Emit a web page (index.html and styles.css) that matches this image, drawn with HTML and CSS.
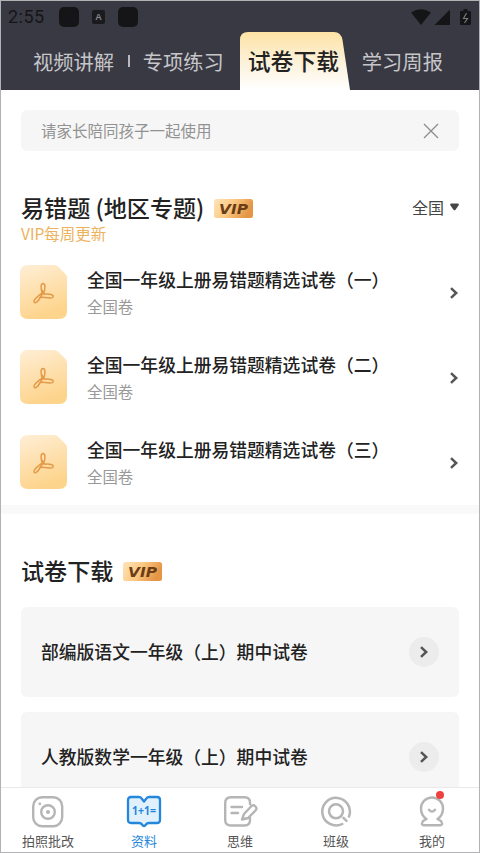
FILE: index.html
```html
<!DOCTYPE html>
<html lang="zh-CN">
<head>
<meta charset="utf-8">
<title>试卷下载</title>
<link rel="stylesheet" href="styles.css">
</head>
<body>
<svg class="defs" width="0" height="0" aria-hidden="true">
  <defs>
    <linearGradient id="doc" x1="0" y1="0" x2="0.3" y2="1"><stop offset="0" stop-color="#ffeed6"/><stop offset="1" stop-color="#fdd48c"/></linearGradient>
    <linearGradient id="tab" x1="0" y1="0" x2="0" y2="1"><stop offset="0" stop-color="#fde2a4"/><stop offset=".5" stop-color="#fcf1d8"/><stop offset="1" stop-color="#fff"/></linearGradient>
    <linearGradient id="gold" x1="0" y1="0" x2="1" y2="0.3"><stop offset="0" stop-color="#fee5ba"/><stop offset=".5" stop-color="#fbc983"/><stop offset="1" stop-color="#e59546"/></linearGradient>
    <symbol id="pdf" viewBox="0 0 47 54">
      <path fill="url(#doc)" d="M8 0H34Q36.500 0 38.300 1.800L45 8.500Q47 10.500 47 13V46Q47 54 39 54H8Q0 54 0 46V8Q0 0 8 0Z"/>
      <path fill="none" stroke="#e59a48" stroke-width="1.500" stroke-linejoin="round" stroke-linecap="round" d="M22.500 29C20.500 24 20.500 18.500 23 18.500S25.600 24 23.500 29M22.200 28C19.500 30 14 34 14 36.200S16.500 38.500 19 34.500L22 29.500M19.500 32.800C24 31 32 34.500 33 32.200S31 28.800 25 29.200Q22.500 27 22 25"/>
    </symbol>
    <symbol id="vip" viewBox="0 0 39 19">
      <rect width="39" height="19" rx="2.500" fill="url(#gold)"/>
      <text x="5" y="14.600" textLength="29" lengthAdjust="spacingAndGlyphs" class="vip-text">VIP</text>
    </symbol>
    <symbol id="chevron" viewBox="0 0 10 14"><path d="M2 2.200L7.200 7L2 11.800" fill="none" stroke="#555" stroke-width="2.500"/></symbol>
  </defs>
</svg>
<div class="phone">
  <header class="header">
    <div class="status">
      <span class="clock">2:55</span>
      <i class="blob"></i><i class="mini">A</i><i class="blob last"></i>
      <svg class="signals" width="62" height="18" viewBox="0 0 62 18">
        <path fill="#151518" d="M1 4.500Q11 -2 21 4.500L11 17ZM40 1.500V17H24.500ZM51 3H53.500V1H57.500V3H60Q61 3 61 4V16Q61 17 60 17H51Q50 17 50 16V4Q50 3 51 3Z"/>
        <path d="M56.500 5L53.500 10.500H57.500L54.500 15" fill="none" stroke="#77777d" stroke-width="1.200"/>
      </svg>
    </div>
    <nav class="tabs">
      <span class="tab video">视频讲解</span><i class="split"></i><span class="tab practice">专项练习</span>
      <span class="tab active"><svg class="shape" width="111" height="58" viewBox="0 0 111 58"><path fill="url(#tab)" d="M0 58V8Q0 0 8 0H94Q101 0 102.500 8L110 58Z"/></svg><b>试卷下载</b></span>
      <span class="tab weekly">学习周报</span>
    </nav>
  </header>
  <main class="content">
    <div class="notice"><span>请家长陪同孩子一起使用</span><svg width="16" height="16" viewBox="0 0 16 16"><path d="M1 1L15 15M15 1L1 15" stroke="#8c8c8c" stroke-width="1.300"/></svg></div>
    <section class="mistakes">
      <div class="heading">
        <h2>易错题 (地区专题)</h2><svg class="vip" width="39" height="19"><use href="#vip"/></svg>
        <span class="region">全国<svg width="9" height="8" viewBox="0 0 9 8"><path fill="#444" d="M1.500 .5H7.500Q9.500 .5 8.500 2.500L5.500 6.700Q4.500 8 3.500 6.700L.5 2.500Q-.5 .5 1.500 .5Z"/></svg></span>
      </div>
      <p class="update">VIP每周更新</p>
      <div class="list">
        <div class="item"><svg class="doc" width="47" height="54"><use href="#pdf"/></svg><div class="info"><h3>全国一年级上册易错题精选试卷（一）</h3><p>全国卷</p></div><svg class="arrow" width="10" height="14"><use href="#chevron"/></svg></div>
        <div class="item"><svg class="doc" width="47" height="54"><use href="#pdf"/></svg><div class="info"><h3>全国一年级上册易错题精选试卷（二）</h3><p>全国卷</p></div><svg class="arrow" width="10" height="14"><use href="#chevron"/></svg></div>
        <div class="item"><svg class="doc" width="47" height="54"><use href="#pdf"/></svg><div class="info"><h3>全国一年级上册易错题精选试卷（三）</h3><p>全国卷</p></div><svg class="arrow" width="10" height="14"><use href="#chevron"/></svg></div>
      </div>
    </section>
    <section class="papers">
      <div class="heading"><h2>试卷下载</h2><svg class="vip" width="39" height="19"><use href="#vip"/></svg></div>
      <div class="card"><h3>部编版语文一年级（上）期中试卷</h3><span class="go"><svg width="10" height="14"><use href="#chevron"/></svg></span></div>
      <div class="card"><h3>人教版数学一年级（上）期中试卷</h3><span class="go"><svg width="10" height="14"><use href="#chevron"/></svg></span></div>
    </section>
  </main>
  <nav class="bottom">
    <div class="nav"><svg width="36" height="34" viewBox="0 0 36 34" fill="none" stroke="#b5b5b5" stroke-width="2.400"><rect x="3.200" y="3.200" width="29" height="29" rx="9"/><circle cx="18" cy="18" r="6.800"/><circle cx="18" cy="18" r="2" fill="#b5b5b5" stroke="none"/><circle cx="9.800" cy="9.800" r="1.400" fill="#b5b5b5" stroke="none"/></svg><span>拍照批改</span></div>
    <div class="nav on"><svg width="36" height="34" viewBox="0 0 36 34"><path d="M5 3H13Q15 3 16 5L18 7.500L20 5Q21 3 23 3H31Q34 3 34 6V26Q34 29 31 29H23Q21 29 20 30.500Q18 33.500 16 30.500Q15 29 13 29H5Q2 29 2 26V6Q2 3 5 3Z" fill="#e0f1fd" stroke="#2587db" stroke-width="2.300" stroke-linejoin="round"/><text x="18" y="20.500" text-anchor="middle" textLength="24" lengthAdjust="spacingAndGlyphs" class="sum">1+1=</text></svg><span>资料</span></div>
    <div class="nav"><svg width="36" height="34" viewBox="0 0 36 34" fill="none" stroke="#b5b5b5" stroke-width="2.400" stroke-linecap="round" stroke-linejoin="round"><path d="M28 10V8.500Q28 3.200 22.500 3.200H9Q3.200 3.200 3.200 9V26Q3.200 31.500 9 31.500H22.500Q28 31.500 28 26V24M9.500 13H20M9.500 19H16M20 25.500L22 20L29.500 12Q31.500 10.500 33.500 12.500T33.500 16.500L26 24Z"/></svg><span>思维</span></div>
    <div class="nav"><svg width="36" height="34" viewBox="0 0 36 34" fill="none" stroke="#b5b5b5" stroke-width="2.500" stroke-linecap="round"><path d="M31 22.500A13.800 13.800 0 1 0 24.200 30M25.500 23.800L28.500 26.800"/><circle cx="18" cy="17.300" r="7"/></svg><span>班级</span></div>
    <div class="nav"><svg width="36" height="34" viewBox="0 0 36 34" fill="none" stroke="#b5b5b5" stroke-width="2.400" stroke-linecap="round" stroke-linejoin="round"><path d="M12.500 25C8.500 22.500 7 18.500 7 14.500A11 11 0 0 1 29 14.500C29 18.500 27.500 22.500 23.500 25L27 27Q29.500 31.300 26 31.300H10Q6.500 31.300 9 27ZM15 15.800Q18 19.500 21 15.800"/></svg><i class="dot"></i><span>我的</span></div>
  </nav>
</div>
</body>
</html>
```
FILE: styles.css
```css
* { box-sizing: border-box; }
body { margin: 0; font-family: "Noto Sans CJK SC", sans-serif; color: #222; background: #fff; }
h2, h3, p { margin: 0; font-weight: 500; }
i { font-style: normal; }
svg { display: block; flex: none; }
.defs { position: absolute; }
.phone { width: 480px; height: 853px; border: 1px solid #b2b2b4; display: flex; flex-direction: column; overflow: hidden; }

.header { height: 89px; background: #393943; flex: none; }
.status { height: 31px; display: flex; align-items: center; padding: 0 7px 0 7px; }
.clock { font: 400 18px/30px Roboto, sans-serif; color: #151518; width: 51px; letter-spacing: .5px; }
.blob { width: 20px; height: 20px; border-radius: 5px; background: #151517; }
.mini { width: 13px; height: 14px; margin: 0 13px; background: #1b1b1f; border-radius: 2px; color: #85858a; font: 700 9px/14px "Liberation Sans", sans-serif; text-align: center; }
.signals { margin-left: auto; }
.tabs { height: 58px; display: flex; align-items: center; }
.tab { font-size: 20.3px; line-height: 58px; color: #c6c6c9; white-space: nowrap; flex: none; }
.video { margin-left: 32px; }
.split { width: 1.5px; height: 12px; background: #b9b9bd; margin: 0 13px 0 14px; }
.active { position: relative; width: 111px; height: 58px; margin-left: 16px; padding-left: 8px; font-size: 22.8px; color: #222; }
.active b { position: relative; font-weight: 500; }
.shape { position: absolute; left: 0; top: 0; }
.weekly { margin-left: 11px; }

.content { flex: 1; min-height: 0; overflow: hidden; }
.notice { margin: 20px 20px 0; height: 41px; border-radius: 6px; background: #f6f6f6; display: flex; align-items: center; justify-content: space-between; padding: 0 20px; font-size: 15.5px; color: #929292; }
.notice span { padding-bottom: 2px; }
.heading { display: flex; align-items: center; height: 34px; padding: 0 20px; }
.heading h2 { font-size: 23.1px; line-height: 34px; padding-bottom: 2px; white-space: nowrap; }
.vip { margin-left: 10px; }
.vip-text { font: italic 700 13.500px "DejaVu Sans", sans-serif; fill: #6b3d16; }
.mistakes { padding-top: 40px; height: 354px; }
.region { margin-left: auto; display: flex; align-items: center; gap: 6px; font-size: 16px; padding-bottom: 2px; color: #444; }
.update { padding-left: 20px; margin-top: -1px; margin-bottom: 1px; font-size: 15.5px; line-height: 18px; font-weight: 400; color: #edb25e; }
.list { padding: 22px 20px 0; }
.item { display: flex; height: 54px; margin-bottom: 31px; }
.doc { margin: 0 20px 0 -1px; }
.info { flex: 1; }
.item h3 { font-size: 17.8px; line-height: 28px; white-space: nowrap; }
.info p { font-size: 15.4px; line-height: 26px; font-weight: 400; color: #999; }
.arrow { margin: 21px 0 0; }
.papers { border-top: 9px solid #f9f9f9; padding-top: 40px; }
.papers .heading { margin-bottom: 19px; }
.card { margin: 0 20px 15px; height: 90px; border-radius: 6px; background: #f6f6f6; padding: 0 20px; display: flex; align-items: center; justify-content: space-between; }
.card h3 { font-size: 17.8px; line-height: 28px; padding-bottom: 2px; }
.go { width: 30px; height: 30px; border-radius: 50%; background: #ececec; display: flex; align-items: center; justify-content: center; }

.bottom { height: 65px; border-top: 1px solid #e9e9e9; background: #fff; display: grid; grid-template-columns: repeat(5, 96px); margin-right: -2px; margin-left: -1px; flex: none; }
.nav { position: relative; display: flex; flex-direction: column; align-items: center; padding-top: 6px; font-size: 13px; line-height: 18px; color: #555; }
.nav span { margin-top: 4px; }
.on { color: #2587db; }
.sum { font: 700 12px "Noto Sans", sans-serif; fill: #2587db; }
.dot { position: absolute; left: 52px; top: 3px; width: 8px; height: 8px; border-radius: 50%; background: #ed4040; }
```
